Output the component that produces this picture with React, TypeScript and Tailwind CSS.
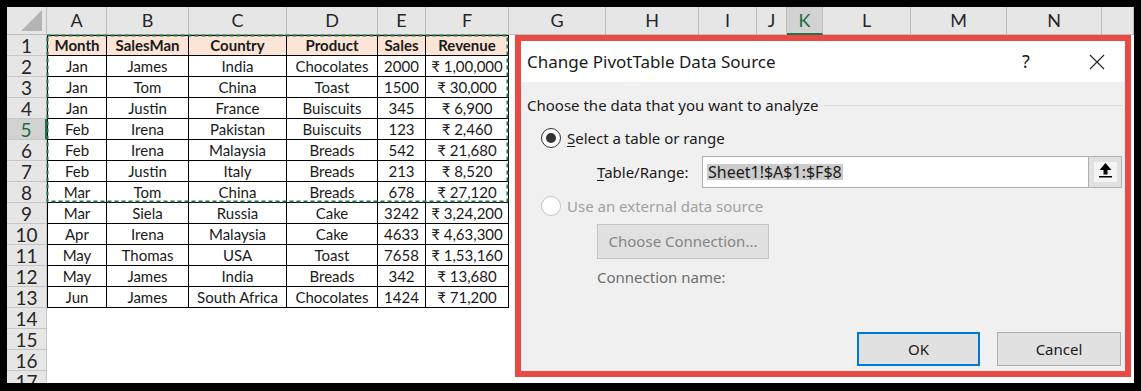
import React from 'react';

const letters = ['A', 'B', 'C', 'D', 'E', 'F', 'G', 'H', 'I', 'J', 'K', 'L', 'M', 'N', ''];

const head = ['Month', 'SalesMan', 'Country', 'Product', 'Sales', 'Revenue'];

const rows: string[][] = [
  ['Jan', 'James', 'India', 'Chocolates', '2000', '₹ 1,00,000'],
  ['Jan', 'Tom', 'China', 'Toast', '1500', '₹ 30,000'],
  ['Jan', 'Justin', 'France', 'Buiscuits', '345', '₹ 6,900'],
  ['Feb', 'Irena', 'Pakistan', 'Buiscuits', '123', '₹ 2,460'],
  ['Feb', 'Irena', 'Malaysia', 'Breads', '542', '₹ 21,680'],
  ['Feb', 'Justin', 'Italy', 'Breads', '213', '₹ 8,520'],
  ['Mar', 'Tom', 'China', 'Breads', '678', '₹ 27,120'],
  ['Mar', 'Siela', 'Russia', 'Cake', '3242', '₹ 3,24,200'],
  ['Apr', 'Irena', 'Malaysia', 'Cake', '4633', '₹ 4,63,300'],
  ['May', 'Thomas', 'USA', 'Toast', '7658', '₹ 1,53,160'],
  ['May', 'James', 'India', 'Breads', '342', '₹ 13,680'],
  ['Jun', 'James', 'South Africa', 'Chocolates', '1424', '₹ 71,200'],
];

const Sheet: React.FC = () => {
  const body = [head, ...rows];
  const rowNums = Array.from({ length: 17 }, (_, i) => i + 1);

  return (
    <div
      className="grid grid-cols-[40px_60px_82px_98px_91px_48px_83px_97px_93px_58px_30px_36px_88px_96px_95px_32px] grid-rows-[28px_repeat(17,21px)] text-[#1a1a1a]"
      style={{ fontFamily: 'Lato, "Liberation Sans", sans-serif' }}
    >
      {/* corner */}
      <div className="bg-[#e6e6e6] border-r border-b border-[#bdbdbd] relative">
        <svg width="40" height="28" className="absolute left-0 top-0">
          <polygon points="35,3 35,24 14,24" fill="#b4b4b4" />
        </svg>
      </div>
      {letters.map((l, i) =>
        l === 'K' ? (
          <div
            key={i}
            className="bg-[#d2d2d2] border-r border-[#bdbdbd] border-b-2 border-b-[#217346] flex items-center justify-center text-[18px] text-[#1e6b3f]"
          >
            {l}
          </div>
        ) : (
          <div
            key={i}
            className="bg-[#e6e6e6] border-r border-b border-[#bdbdbd] flex items-center justify-center text-[18px] text-[#262626]"
          >
            {l}
          </div>
        )
      )}

      {rowNums.map((n) => (
        <React.Fragment key={n}>
          {n === 5 ? (
            <div className="bg-[#d2d2d2] border-b border-[#c6c6c6] border-r-2 border-r-[#217346] flex items-center justify-center text-[19px] leading-none text-[#1e6b3f]">
              {n}
            </div>
          ) : (
            <div className="bg-[#e6e6e6] border-b border-r border-[#c6c6c6] flex items-center justify-center text-[19px] leading-none text-[#262626]">
              {n}
            </div>
          )}
          {letters.map((_, c) => {
            const data = n <= 13 && c < 6 ? body[n - 1][c] : null;
            if (data === null) return <div key={c} className="bg-white" />;
            return (
              <div
                key={c}
                className={`flex items-center justify-center border-r border-b border-black text-[15px] whitespace-nowrap ${
                  n === 1 ? 'bg-[#fce4d6] font-bold border-t' : 'bg-white'
                } ${c === 0 ? 'border-l' : ''}`}
              >
                {data}
              </div>
            );
          })}
        </React.Fragment>
      ))}
    </div>
  );
};

const Radio: React.FC<{ checked?: boolean; disabled?: boolean }> = ({ checked, disabled }) => (
  <span
    className={`w-[20px] h-[20px] rounded-full border flex items-center justify-center bg-white ${
      disabled ? 'border-[#c4c4c4]' : 'border-[#333333]'
    }`}
  >
    {checked && <span className="w-[10px] h-[10px] rounded-full bg-[#333333]" />}
  </span>
);

const Dialog: React.FC = () => (
  <div
    className="absolute left-[515px] top-[35px] w-[616px] h-[342px] border-[6px] border-[#e84a44] flex flex-col text-[#1a1a1a]"
    style={{ fontFamily: '"Noto Sans", "Open Sans", sans-serif' }}
  >
    <div className="h-[41px] bg-white flex items-center pl-[6px] pr-[5px]">
      <span className="flex-1 text-[17px]">Change PivotTable Data Source</span>
      <span className="w-[46px] text-center text-[18px]">?</span>
      <span className="w-[46px] ml-[25px] flex items-center justify-center">
        <svg width="16" height="16" viewBox="0 0 16 16">
          <path d="M1 1 L15 15 M15 1 L1 15" stroke="#222" strokeWidth="1.1" />
        </svg>
      </span>
    </div>
    <div className="flex-1 bg-[#f0f0f0] flex flex-col text-[15px]">
      <div className="mt-[13px] h-[20px] flex items-center pl-[6px] pr-[3px]">
        <span>Choose the data that you want to analyze</span>
        <span className="flex-1 ml-[6px] h-px bg-[#dadada]" />
      </div>
      <div className="mt-[12px] h-[22px] flex items-center pl-[20px]">
        <Radio checked />
        <span className="ml-[6px]">
          <span className="underline underline-offset-2">S</span>elect a table or range
        </span>
      </div>
      <div className="mt-[7px] h-[32px] flex items-center pl-[76px]">
        <span className="w-[105px]">
          <span className="underline underline-offset-2">T</span>able/Range:
        </span>
        <div className="w-[420px] h-[32px] border border-[#b0b0b0] bg-white flex items-center">
          <span className="ml-[4px] bg-[#cccccc] px-px text-[16px] leading-[16px]">Sheet1!$A$1:$F$8</span>
          <span className="flex-1" />
          <span className="w-[33px] h-full border-l border-[#b0b0b0] bg-[#e1e1e1] flex items-center justify-center">
            <span className="w-[23px] h-[20px] bg-[#f4f4f4] flex items-center justify-center">
              <svg width="23" height="20" viewBox="0 0 23 20">
                <polygon points="11.5,1 17.5,8 13.5,8 13.5,12.5 9.5,12.5 9.5,8 5.5,8" fill="#000" />
                <rect x="5" y="14" width="13" height="1.5" fill="#000" />
              </svg>
            </span>
          </span>
        </div>
      </div>
      <div className="mt-[7px] h-[22px] flex items-center pl-[20px]">
        <Radio disabled />
        <span className="ml-[6px] text-[#a0a0a0]">Use an external data source</span>
      </div>
      <div className="mt-[7px] h-[35px] pl-[76px] flex">
        <div className="w-[172px] h-[35px] border border-[#c3c3c3] bg-[#e1e1e1] flex items-center justify-center text-[#858585]">
          Choose Connection...
        </div>
      </div>
      <div className="mt-[8px] h-[20px] flex items-center pl-[76px] text-[#6e6e6e]">Connection name:</div>
      <div className="mt-auto mb-[5px] flex justify-end pr-[4px] gap-[17px]">
        <div className="w-[123px] h-[34px] border-2 border-[#0078d7] bg-[#e1e1e1] flex items-center justify-center">
          OK
        </div>
        <div className="w-[124px] h-[34px] border border-[#adadad] bg-[#e1e1e1] flex items-center justify-center">
          Cancel
        </div>
      </div>
    </div>
  </div>
);

const App: React.FC = () => {
  return (
    <div className="w-[1141px] h-[391px] bg-black relative overflow-hidden">
      <div className="absolute left-[7px] top-[7px] w-[1127px] h-[376px] overflow-hidden bg-white">
        <Sheet />
        {/* copy marquee round A1:F8 */}
        <svg width="464" height="170" className="absolute left-[39px] top-[27px] pointer-events-none">
          <rect x="1.5" y="1.5" width="460" height="166" fill="none" stroke="#217346" strokeWidth="2" strokeDasharray="4 3" />
        </svg>
      </div>
      <Dialog />
    </div>
  );
};

export default App;
